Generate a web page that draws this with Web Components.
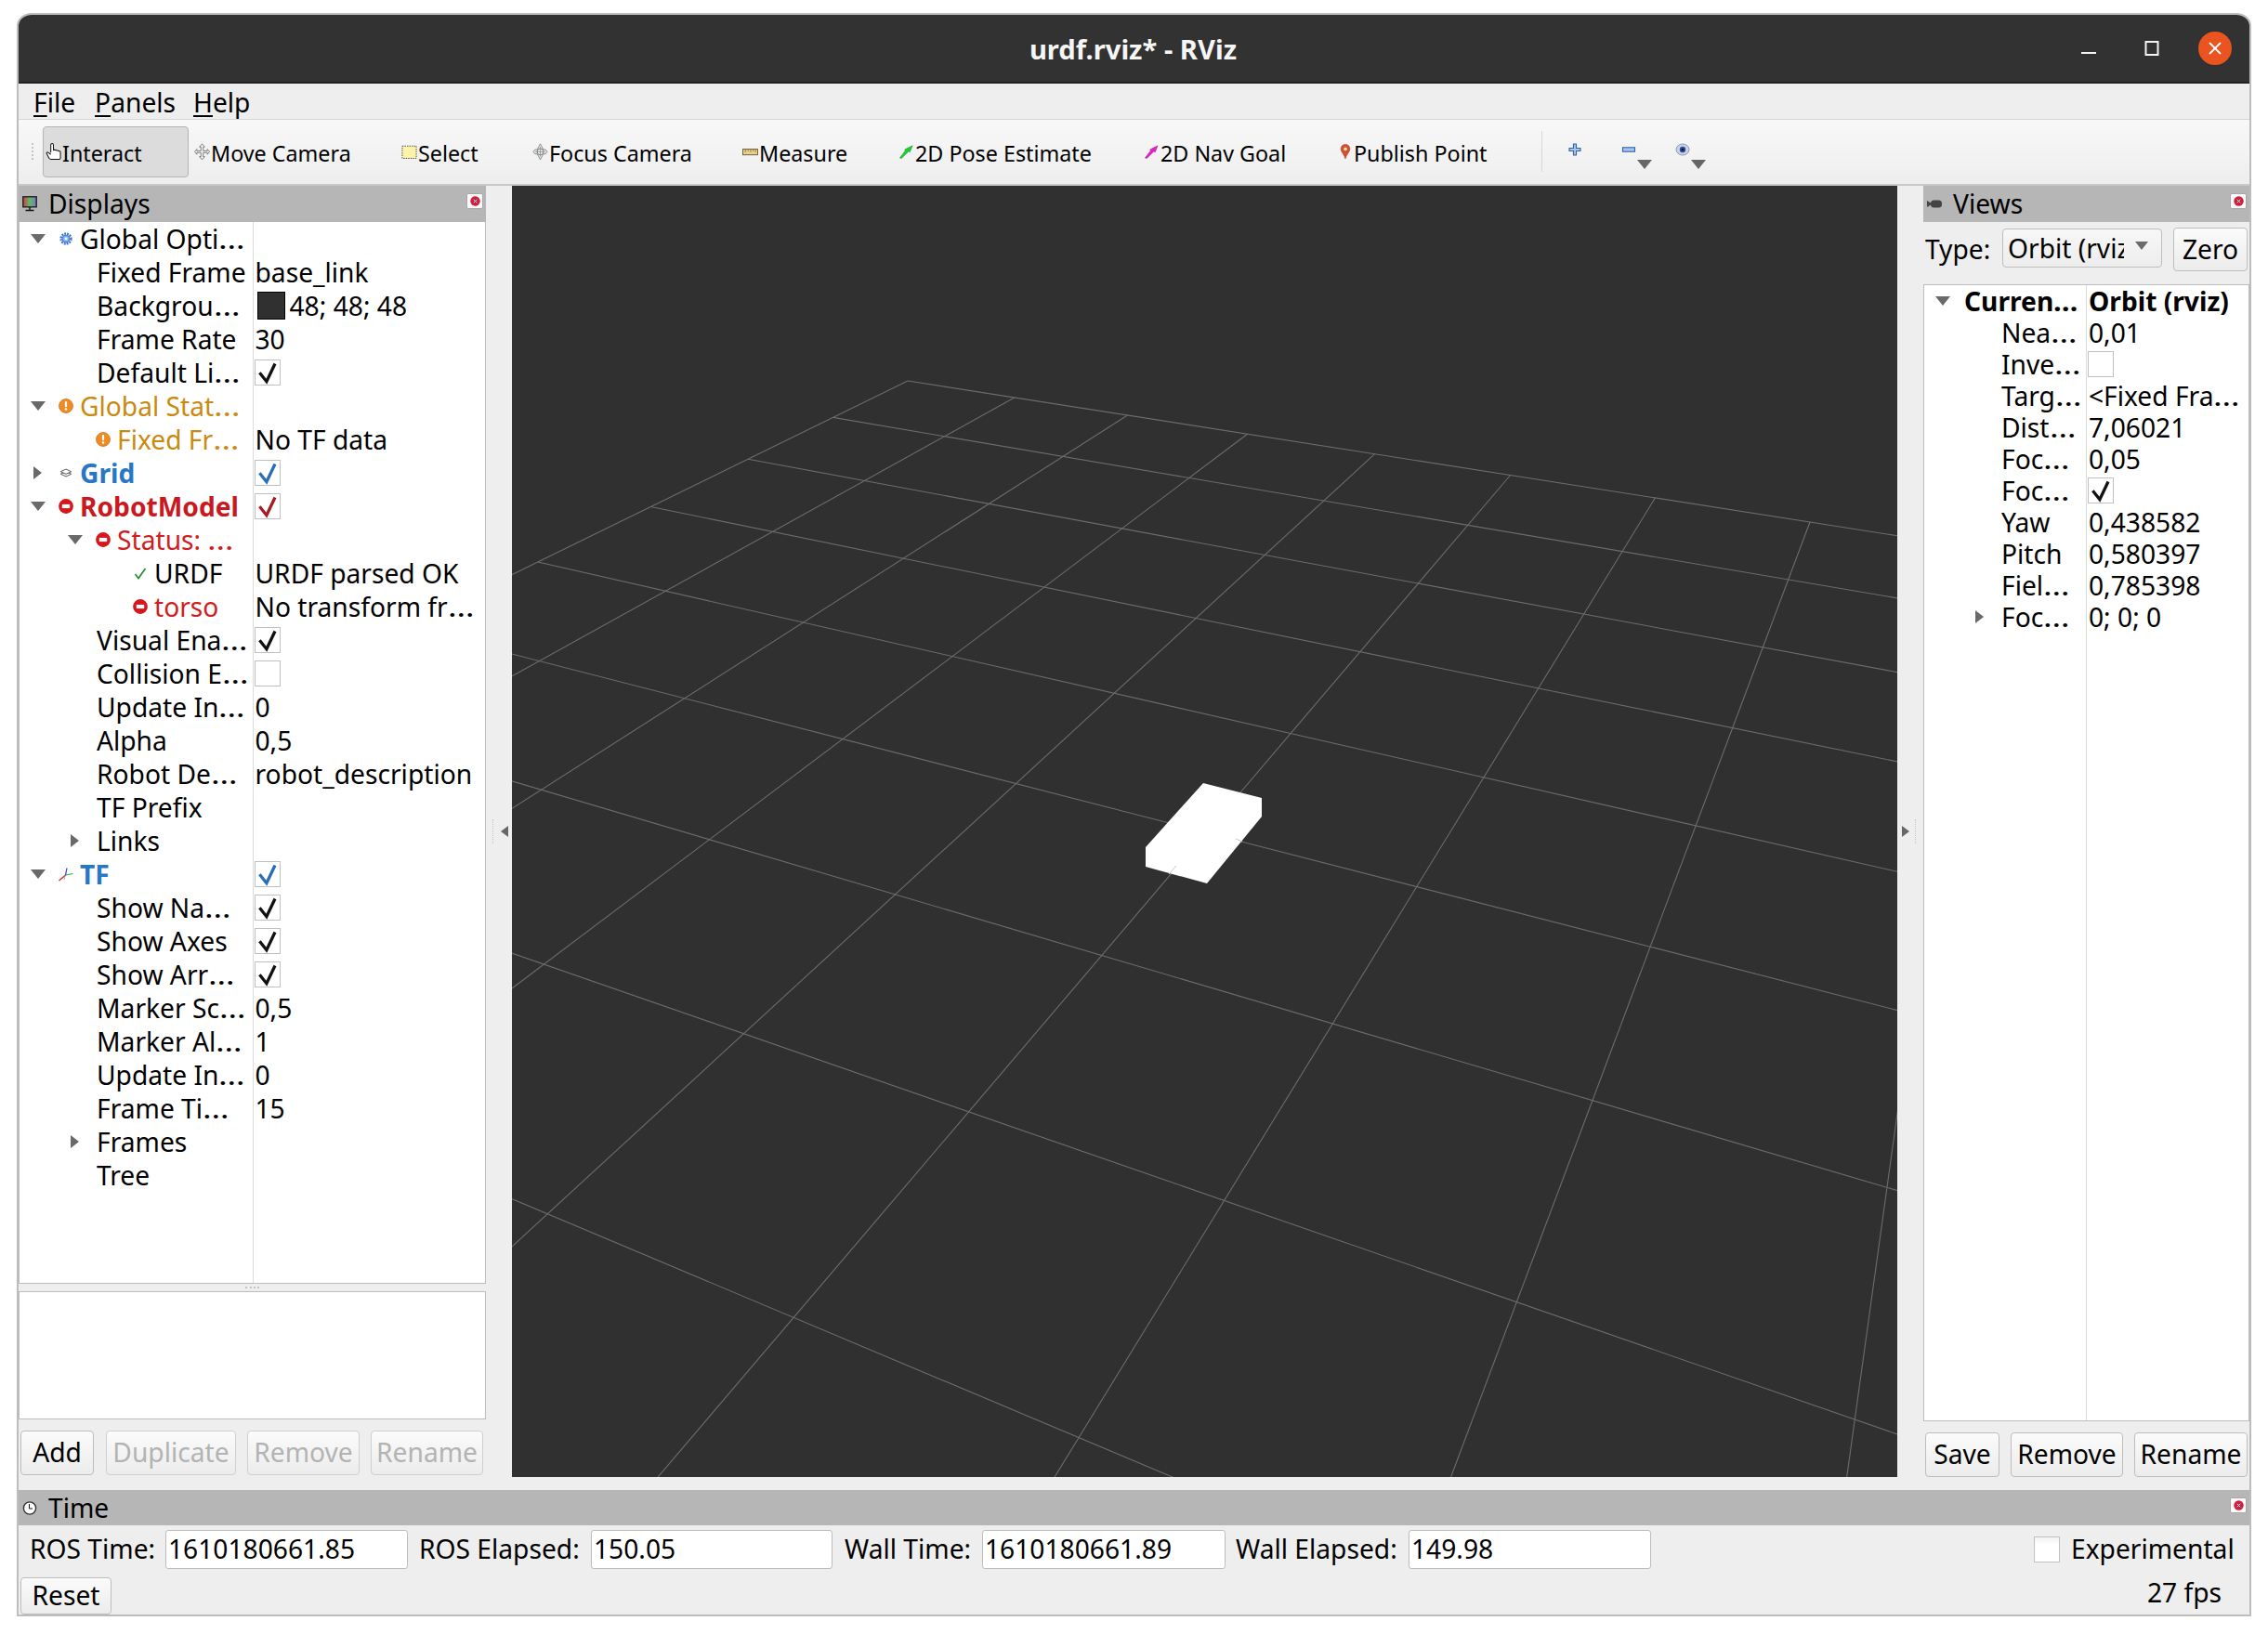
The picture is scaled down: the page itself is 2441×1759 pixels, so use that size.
<!DOCTYPE html>
<html lang="en"><head><meta charset="utf-8"><title>urdf.rviz* - RViz</title>
<style>
html,body{margin:0;background:#fff;overflow:hidden}
body{font-family:"Noto Sans","Open Sans",sans-serif;color:#000;font-size:28.2px}
</style></head><body>
<rviz-window>
  <title-bar slot="top">urdf.rviz* - RViz</title-bar>
  <menu-bar slot="top"><menu-item>File</menu-item><menu-item style="margin-left:21px">Panels</menu-item><menu-item style="margin-left:19px">Help</menu-item></menu-bar>
  <tool-bar slot="top">
    <tool-btn icon="hand" w="157" active>Interact</tool-btn>
    <tool-btn icon="move" w="223" style="margin-left:3px">Move Camera</tool-btn>
    <tool-btn icon="select" w="141">Select</tool-btn>
    <tool-btn icon="focus" w="226">Focus Camera</tool-btn>
    <tool-btn icon="measure" w="168">Measure</tool-btn>
    <tool-btn icon="pose" w="264">2D Pose Estimate</tool-btn>
    <tool-btn icon="nav" w="211">2D Nav Goal</tool-btn>
    <tool-btn icon="pin" w="220" narrow>Publish Point</tool-btn>
  </tool-bar>
  <main-area slot="main">
    <dock-panel icon="monitor" heading="Displays">
      <prop-tree notop style="--name-w:250.5px;--row-h:36px;flex:1">
        <prop-row arrow="down" icon="gear" name="Global Opti…"></prop-row>
        <prop-row level="1" name="Fixed Frame" value="base_link"></prop-row>
        <prop-row level="1" name="Backgrou…" value="48; 48; 48" swatch="#303030"></prop-row>
        <prop-row level="1" name="Frame Rate" value="30"></prop-row>
        <prop-row level="1" name="Default Li…" check="#111"></prop-row>
        <prop-row arrow="down" icon="warn" name="Global Stat…" color="#c88a10"></prop-row>
        <prop-row level="1" icon="warn" name="Fixed Fr…" color="#c88a10" value="No TF data"></prop-row>
        <prop-row arrow="right" icon="grid" name="Grid" color="#2a76c6" bold check="#2a6db5"></prop-row>
        <prop-row arrow="down" icon="err" name="RobotModel" color="#c8191f" bold check="#a81c24"></prop-row>
        <prop-row level="1" arrow="down" icon="err" name="Status: …" color="#cf1d22"></prop-row>
        <prop-row level="2" icon="ok" name="URDF" value="URDF parsed OK"></prop-row>
        <prop-row level="2" icon="err" name="torso" color="#cf1d22" value="No transform fr…"></prop-row>
        <prop-row level="1" name="Visual Ena…" check="#111"></prop-row>
        <prop-row level="1" name="Collision E…" check="off"></prop-row>
        <prop-row level="1" name="Update In…" value="0"></prop-row>
        <prop-row level="1" name="Alpha" value="0,5"></prop-row>
        <prop-row level="1" name="Robot De…" value="robot_description"></prop-row>
        <prop-row level="1" name="TF Prefix"></prop-row>
        <prop-row level="1" arrow="right" name="Links"></prop-row>
        <prop-row arrow="down" icon="tf" name="TF" color="#2a76c6" bold check="#2a6db5"></prop-row>
        <prop-row level="1" name="Show Na…" check="#111"></prop-row>
        <prop-row level="1" name="Show Axes" check="#111"></prop-row>
        <prop-row level="1" name="Show Arr…" check="#111"></prop-row>
        <prop-row level="1" name="Marker Sc…" value="0,5"></prop-row>
        <prop-row level="1" name="Marker Al…" value="1"></prop-row>
        <prop-row level="1" name="Update In…" value="0"></prop-row>
        <prop-row level="1" name="Frame Ti…" value="15"></prop-row>
        <prop-row level="1" arrow="right" name="Frames"></prop-row>
        <prop-row level="1" name="Tree"></prop-row>
      </prop-tree>
      <grip-h></grip-h>
      <help-box></help-box>
      <btn-row style="margin:12px 0 16px 2px">
        <q-button w="79">Add</q-button>
        <q-button w="140" disabled style="margin-left:13px">Duplicate</q-button>
        <q-button w="121" disabled style="margin-left:12px">Remove</q-button>
        <q-button w="121" disabled style="margin-left:12px">Rename</q-button>
      </btn-row>
    </dock-panel>
    <split-handle dir="left"></split-handle>
    <viewport-3d></viewport-3d>
    <split-handle dir="right"></split-handle>
    <dock-panel icon="camera" heading="Views">
      <type-row>
        <span>Type:</span>
        <q-combo>Orbit (rviz)</q-combo>
        <q-button w="80" h="47">Zero</q-button>
      </type-row>
      <prop-tree style="--name-w:174px;--row-h:34px;flex:1">
        <prop-row arrow="down" name="Curren…" value="Orbit (rviz)" bold vbold></prop-row>
        <prop-row level="1" name="Nea…" value="0,01"></prop-row>
        <prop-row level="1" name="Inve…" check="off"></prop-row>
        <prop-row level="1" name="Targ…" value="&lt;Fixed Fra…"></prop-row>
        <prop-row level="1" name="Dist…" value="7,06021"></prop-row>
        <prop-row level="1" name="Foc…" value="0,05"></prop-row>
        <prop-row level="1" name="Foc…" check="#111"></prop-row>
        <prop-row level="1" name="Yaw" value="0,438582"></prop-row>
        <prop-row level="1" name="Pitch" value="0,580397"></prop-row>
        <prop-row level="1" name="Fiel…" value="0,785398"></prop-row>
        <prop-row level="1" arrow="right" name="Foc…" value="0; 0; 0"></prop-row>
      </prop-tree>
      <btn-row style="margin:12px 0 14px 2px">
        <q-button w="80">Save</q-button>
        <q-button w="121" style="margin-left:12px">Remove</q-button>
        <q-button w="122" style="margin-left:12px">Rename</q-button>
      </btn-row>
    </dock-panel>
  </main-area>
  <dock-panel slot="bottom" icon="clock" heading="Time" style="--head-h:38px">
    <time-row>
      <time-label w="146" style="margin-left:12px">ROS Time:</time-label><q-input w="261">1610180661.85</q-input>
      <time-label w="185" style="margin-left:12px">ROS Elapsed:</time-label><q-input w="260">150.05</q-input>
      <time-label w="148" style="margin-left:13px">Wall Time:</time-label><q-input w="262">1610180661.89</q-input>
      <time-label w="186" style="margin-left:11px">Wall Elapsed:</time-label><q-input w="261">149.98</q-input>
      <span style="flex:1"></span>
      <check-box color="off" plain></check-box><time-label w="192" style="margin-left:12px">Experimental</time-label>
    </time-row>
    <reset-row><q-button w="98" h="40">Reset</q-button><time-label w="80" style="margin-bottom:7px">27 fps</time-label></reset-row>
  </dock-panel>
</rviz-window>
<script>
const ICONS={
 gear:'<svg viewBox="0 0 16 16"><circle cx="8" cy="8" r="6.200" fill="none" stroke="#3a78cc" stroke-width="2.800" stroke-dasharray="2.100 1.200"/><circle cx="8" cy="8" r="4.400" fill="#86b3ec" stroke="#3a78cc" stroke-width="1.200"/><circle cx="8" cy="8" r="1.700" fill="#f4f8fe"/></svg>',
 warn:'<svg viewBox="0 0 16 16"><circle cx="8" cy="8" r="7.500" fill="#ee8b25" stroke="#d0751b" stroke-width=".8"/><rect x="6.900" y="3" width="2.200" height="6.200" rx=".8" fill="#fff"/><circle cx="8" cy="11.500" r="1.300" fill="#fff"/></svg>',
 err:'<svg viewBox="0 0 16 16"><circle cx="8" cy="8" r="7.900" fill="#d9141a"/><rect x="3.800" y="5.900" width="8.400" height="4.200" fill="#fff"/></svg>',
 grid:'<svg viewBox="0 0 16 16"><path d="M8 6.500 14.500 9.500 8 12.500 1.500 9.500Z" fill="#fff" stroke="#444" stroke-width="1"/><path d="M8 3.500 14.500 6.500 8 9.500 1.500 6.500Z" fill="#fff" stroke="#444" stroke-width="1"/></svg>',
 ok:'<svg viewBox="0 0 16 16"><path d="M2.500 9 6 13.500 13.500 3" fill="none" stroke="#2d8a33" stroke-width="1.700"/></svg>',
 tf:'<svg viewBox="0 0 16 16"><path d="M7.500 9 .5 15" stroke="#d22" stroke-width="1.300"/><path d="M7.500 9 15.500 7.500" stroke="#2b3" stroke-width="1.200"/><path d="M7.500 9 9 1.500" stroke="#33c" stroke-width="1.200"/><path d="M7.500 9 4 13 M7.500 9 6 14" stroke="#888" stroke-width=".7"/></svg>',
 hand:'<svg viewBox="0 0 18 22"><path d="M6 12V3.200a1.500 1.500 0 0 1 3 0V9l1-.3V9l2 .1v.2l2 .3.2.3 2 .5c.6.2.8.6.8 1.300v6.200c0 1-.7 1.600-1.700 1.600H6.200c-1 0-1.600-.4-2.200-1.300L1.300 13c-.5-1 .7-2 1.700-1.200L6 14" fill="#fff" stroke="#111" stroke-width="1.100"/></svg>',
 move:'<svg viewBox="0 0 18 22"><path d="M9 2 12 5.500H10.300V10H15V8L17.500 11 15 14V12H10.300V16.500H12L9 20 6 16.500H7.700V12H3V14L.5 11 3 8V10H7.700V5.500H6Z" fill="#f2f2f2" stroke="#777" stroke-width="1"/></svg>',
 select:'<svg viewBox="0 0 18 22"><rect x="1" y="4.500" width="16" height="14" fill="#fbf3a8" stroke="#444" stroke-width="1" stroke-dasharray="1.500 1.200"/></svg>',
 focus:'<svg viewBox="0 0 18 22"><path d="M9 2 12.500 8.500H15L17 11 15 13.500H12.500L9 20 5.500 13.500H3L1 11 3 8.500H5.500Z" fill="#e6e6e6" stroke="#8a8a8a" stroke-width="1"/><circle cx="9" cy="11" r="3.600" fill="#efefef" stroke="#777" stroke-width="1"/><path d="M9 5.500V16.500M3.500 11H14.500" stroke="#888" stroke-width=".8"/></svg>',
 measure:'<svg viewBox="0 0 18 22"><rect x=".5" y="8" width="17" height="6.500" fill="#e8cf8c" stroke="#6b5d3a" stroke-width="1"/><path d="M3.500 8.500v3M6.500 8.500v2M9.500 8.500v3M12.500 8.500v2M15 8.500v3" stroke="#6b5d3a" stroke-width=".7"/></svg>',
 pose:'<svg viewBox="0 0 18 22"><path d="M1.500 18 8 9.500 7 8.500 16 4 13 11.500 11.500 10.500 3.500 18.500Z" fill="#19d130" stroke="#108020" stroke-width=".5"/></svg>',
 nav:'<svg viewBox="0 0 18 22"><path d="M1.500 18 8 9.500 7 8.500 16 4 13 11.500 11.500 10.500 3.500 18.500Z" fill="#e81fc3" stroke="#a01488" stroke-width=".5"/></svg>',
 pin:'<svg viewBox="0 0 16 22"><path d="M8 21.500C6.500 15 1.500 11.500 1.500 7a6.500 6.500 0 0 1 13 0c0 4.500-5 8-6.500 14.500Z" fill="#d3512f" stroke="#933" stroke-width=".7"/><circle cx="8" cy="7" r="2.500" fill="#f7d9b0"/></svg>',
 plus:'<svg viewBox="0 0 16 22"><path d="M6.500 5H9.500V9.500H14V12.500H9.500V17H6.500V12.500H2V9.500H6.500Z" fill="#a8c6ec" stroke="#2f62ad" stroke-width="1.100"/></svg>',
 minus:'<svg viewBox="0 0 16 22"><rect x="1.500" y="8.800" width="13" height="4.400" fill="#a8c6ec" stroke="#2f62ad" stroke-width="1.100"/></svg>',
 eye:'<svg viewBox="0 0 16 22"><ellipse cx="8" cy="11" rx="7" ry="6" fill="#c8d4e6" stroke="#8f9bb0" stroke-width="1"/><circle cx="8" cy="11" r="3.200" fill="#2a4f96"/><circle cx="8" cy="11" r="1.300" fill="#0c1630"/></svg>',
 monitor:'<svg viewBox="0 0 16 17"><defs><linearGradient id="m"><stop offset="0" stop-color="#c94040"/><stop offset=".5" stop-color="#66b868"/><stop offset="1" stop-color="#7a78c8"/></linearGradient></defs><rect x=".8" y=".8" width="14.400" height="11" fill="url(#m)" stroke="#222" stroke-width="1.400"/><path d="M8 12V15M3.500 15.500H12.500" stroke="#111" stroke-width="1.400"/></svg>',
 camera:'<svg viewBox="0 0 16 17"><path d="M0 5V12L4 9.500V7.500Z" fill="#444"/><rect x="4" y="4.500" width="12" height="8" rx="3.500" fill="#444"/></svg>',
 clock:'<svg viewBox="0 0 16 17"><circle cx="8" cy="8.500" r="6.600" fill="#fff" stroke="#333" stroke-width="1.400"/><path d="M7.500 4V9H11" fill="none" stroke="#111" stroke-width="1"/></svg>'
};
function def(tag,html,init){
  customElements.define(tag,class extends HTMLElement{
    connectedCallback(){
      if(this.shadowRoot)return;
      const r=this.attachShadow({mode:'open'});
      r.innerHTML=typeof html==='function'?html(this):html;
      if(init)init(this,r);
    }
  });
}
const attr=(e,n,d='')=>e.hasAttribute(n)?e.getAttribute(n):d;
const txt=s=>s.replace(/&/g,'&amp;').replace(/</g,'&lt;').replace('…','<span class="e">…</span>');
def('r-icon',e=>`<style>:host{display:inline-flex;align-items:center;justify-content:center;flex:none;width:var(--s,16px)}svg{display:block;width:100%;height:auto}</style>${ICONS[attr(e,'name')]||''}`);
def('rviz-window',`<style>
:host{display:flex;flex-direction:column;box-sizing:border-box;width:2405px;height:1726px;margin:14px 0 0 18px;background:#eee;border:2px solid #bdbdbd;border-top-left-radius:16px 14px;border-top-right-radius:16px 14px;overflow:hidden}
</style><slot name="top"></slot><slot name="main"></slot><slot name="bottom"></slot>`);
def('title-bar',`<style>
:host{display:grid;grid-template-columns:1fr auto 1fr;align-items:center;flex:none;box-sizing:border-box;height:74px;background:#333232;border-bottom:2px solid #222;color:#f6f6f6;font:700 29.2px "Noto Sans",sans-serif}
.c{grid-column:2;padding-top:2px;margin-left:-2px}
.w{grid-column:3;justify-self:end;display:flex;margin-right:3px}
.b{width:68px;height:36px;display:flex;align-items:center;justify-content:center}
.x{width:36px;height:36px;border-radius:50%;background:#e95420;display:flex;align-items:center;justify-content:center}
svg{display:block}
</style><div class="c"><slot></slot></div><div class="w">
<div class="b"><svg width="16" height="16" viewBox="0 0 16 16"><path d="M0 13H16" stroke="#f4f4f4" stroke-width="2"/></svg></div>
<div class="b"><svg width="16" height="16" viewBox="0 0 16 16"><rect x="1.500" y="1" width="13" height="14" fill="none" stroke="#f4f4f4" stroke-width="2"/></svg></div>
<div class="b"><div class="x"><svg width="16" height="16" viewBox="0 0 16 16"><path d="M2 2 14 14M14 2 2 14" stroke="#fff" stroke-width="1.800"/></svg></div></div>
</div>`);
def('menu-bar',`<style>:host{display:flex;align-items:center;flex:none;box-sizing:border-box;height:39px;padding:1px 0 0 16px;border-bottom:1px solid #d6d6d6;background:#eee}</style><slot></slot>`);
def('menu-item',e=>{const t=e.textContent;return `<style>:host{display:block;line-height:36px}u{text-decoration:underline;text-decoration-thickness:2px;text-underline-offset:3px}</style><span><u>${t[0]}</u>${t.slice(1)}</span>`});
def('tool-bar',`<style>:host{display:flex;align-items:center;flex:none;box-sizing:border-box;height:71px;padding:0 0 1px 26px;background:linear-gradient(#f8f8f8,#eee);border-bottom:2px solid #c8c8c8}
.grip{box-sizing:border-box;width:2px;height:18px;margin:0 10px 0 -12px;border-left:2px dotted #c4c4c4}
.sep{width:1px;height:44px;background:#d8d8d8;margin-right:27px;flex:none}
.i{display:flex;flex-direction:column;width:58px;height:50px;align-items:flex-start;flex:none}
.i r-icon{margin-top:12px}
.a{width:0;height:0;border-left:8px solid transparent;border-right:8px solid transparent;border-top:10px solid #666;margin:0 0 0 17px}
</style><div class="grip"></div><slot></slot><div class="sep"></div>
<div class="i"><r-icon name="plus"></r-icon></div>
<div class="i"><r-icon name="minus"></r-icon><div class="a"></div></div>
<div class="i"><r-icon name="eye"></r-icon><div class="a"></div></div>`);
def('tool-btn',e=>`<style>:host{display:flex;align-items:center;flex:none;box-sizing:border-box;width:${attr(e,'w')}px;height:55px;font-size:23.300px;padding-left:3px;white-space:nowrap;${e.hasAttribute('active')?'background:#dcdcdc;border:1px solid #b4b4b4;border-radius:4px;padding-left:2px;':''}}
r-icon{--s:${e.hasAttribute('narrow')?'12px':'17px'};margin-right:${e.hasAttribute('narrow')?'3px':'1px'}}
span{padding-top:3px}</style><r-icon name="${attr(e,'icon')}"></r-icon><span><slot></slot></span>`);
def('main-area',`<style>:host{display:grid;grid-template-columns:503px 28px 1491px 28px 351px;flex:1;min-height:0}</style><slot></slot>`);
def('dock-panel',e=>`<style>:host{display:flex;flex-direction:column;min-height:0;min-width:0}
.h{display:flex;align-items:center;flex:none;height:var(--head-h,39px);background:#b6b6b6;padding:0 3px 0 4px;box-sizing:border-box}
.t{margin-left:12px;flex:1;line-height:1}
.x{width:16px;height:15px;background:#fafafa;border:1px solid #a8a8a8;border-radius:2px;display:flex;align-items:center;justify-content:center;margin-top:-6px}
.x svg{display:block}
</style><div class="h"><r-icon name="${attr(e,'icon')}"></r-icon><span class="t">${attr(e,'heading')}</span>
<div class="x"><svg width="11" height="11" viewBox="0 0 11 11"><circle cx="5.500" cy="5.500" r="5.200" fill="#d01f3c"/><path d="M3.800 3.800 7.200 7.200M7.200 3.800 3.800 7.200" stroke="#fff" stroke-width="1"/></svg></div></div><slot></slot>`);
def('prop-tree',e=>`<style>:host{display:block;min-height:0;box-sizing:border-box;border:1px solid #bdbdbd;${e.hasAttribute('notop')?'border-top:0;':''}overflow:hidden;background:linear-gradient(#dcdcdc,#dcdcdc) no-repeat var(--name-w) 0/1px 100%,#fff}</style><slot></slot>`);
def('prop-row',e=>{
  const lvl=+attr(e,'level','0'),arrow=attr(e,'arrow'),icon=attr(e,'icon'),ck=attr(e,'check'),sw=attr(e,'swatch'),bold=e.hasAttribute('bold');
  const s=(icon==='grid'||icon==='gear')?14:16;
  const a=arrow==='down'?'<svg width="16" height="10" viewBox="0 0 16 10"><path d="M0 0H16L8 10Z" fill="#696969"/></svg>':arrow==='right'?'<svg width="10" height="14" viewBox="0 0 10 14"><path d="M0 0V14L9 7Z" fill="#696969"/></svg>':'';
  return `<style>:host{display:grid;grid-template-columns:var(--name-w) 1fr;height:var(--row-h);align-items:center;white-space:nowrap;line-height:1.2}
.n{display:flex;align-items:center;padding-left:${lvl*40+8}px;height:100%;box-sizing:border-box;color:${attr(e,'color','#000')};${bold?'font-weight:700;':''}}
.a{width:24px;flex:none;display:flex;align-items:center;justify-content:center}
r-icon{margin:0 ${16-s/2-1}px 0 ${18-s/2}px;--s:${s}px}
.nt{${icon?'':'margin-left:11px;'}padding-top:1px}
.v{padding-left:${sw||ck?2:3}px;display:flex;align-items:center;${e.hasAttribute('vbold')?'font-weight:700;':''}}
.v span.t{padding-top:1px}
.s{width:30px;height:30px;box-sizing:border-box;background:${sw};border:1px solid #000;margin:0 5px 0 3px;flex:none}
.e{display:inline-block;transform:scaleX(${bold?1.1:1.28});transform-origin:0 50%;margin-right:${bold?1:4}px}
</style><div class="n"><div class="a">${a}</div>${icon?`<r-icon name="${icon}"></r-icon>`:''}<span class="nt">${txt(attr(e,'name'))}</span></div><div class="v">${sw?'<span class="s"></span>':''}${ck?`<check-box color="${ck}"></check-box>`:''}<span class="t">${txt(attr(e,'value'))}</span></div>`});
def('check-box',e=>{const c=attr(e,'color','off');return `<style>:host{display:block;flex:none;width:28px;height:28px;box-sizing:border-box;border:1px solid #c0c0c0;background:${e.hasAttribute('plain')?'linear-gradient(#f2f2f2,#fff 30%)':'#fff'}}svg{display:block}</style>${c==='off'?'':`<svg width="26" height="26" viewBox="0 0 26 26"><path d="M4.400 13.300 11.900 22.700 21 3.500" fill="none" stroke="${c}" stroke-width="3.300"/></svg>`}`});
def('q-button',e=>`<style>:host{display:flex;align-items:center;justify-content:center;flex:none;box-sizing:border-box;width:${attr(e,'w')}px;height:${attr(e,'h','48')}px;padding-bottom:2px;border:1px solid ${e.hasAttribute('disabled')?'#cfcfcf':'#bdbdbd'};border-radius:4px;background:linear-gradient(#fbfbfb,#ececec);color:${e.hasAttribute('disabled')?'#b3b3b3':'#000'};white-space:nowrap}</style><slot></slot>`);
def('q-input',e=>`<style>:host{display:flex;align-items:center;flex:none;box-sizing:border-box;width:${attr(e,'w')}px;height:42px;padding:0 0 2px 2px;background:#fff;border:1px solid #bdbdbd;border-radius:3px;white-space:nowrap}</style><slot></slot>`);
def('q-combo',`<style>:host{display:flex;align-items:center;flex:none;box-sizing:border-box;width:172px;height:42px;margin-top:-3px;padding:0 0 0 5px;background:linear-gradient(#f7f7f7,#ededed);border:1px solid #bdbdbd;border-radius:4px}
.t{display:block;width:125px;overflow:hidden;white-space:nowrap;line-height:1.3}
i{width:0;height:0;border-left:7px solid transparent;border-right:7px solid transparent;border-top:9px solid #6a6a6a;margin:-5px 0 0 12px}</style><span class="t"><slot></slot></span><i></i>`);
def('btn-row',`<style>:host{display:flex;flex:none}</style><slot></slot>`);
def('type-row',`<style>:host{display:flex;align-items:center;flex:none;height:47px;margin:6px 2px 14px 2px}::slotted(q-combo){margin-left:12px}::slotted(q-button){margin-left:12px}::slotted(span){width:71px;flex:none;padding-bottom:2px}</style><slot></slot>`);
def('time-row',`<style>:host{display:flex;align-items:center;flex:none;height:42px;margin-top:5px;white-space:nowrap}</style><slot></slot>`);
def('time-label',e=>`<style>:host{display:block;flex:none;width:${attr(e,'w')}px;padding-bottom:2px}</style><slot></slot>`);
def('reset-row',`<style>:host{display:flex;align-items:center;justify-content:space-between;flex:none;height:40px;margin-top:9px;padding:0 30px 0 2px;white-space:nowrap}</style><slot></slot>`);
def('help-box',`<style>:host{display:block;flex:none;box-sizing:border-box;height:138px;background:#fff;border:1px solid #bdbdbd}</style>`);
def('grip-h',`<style>:host{display:flex;justify-content:center;align-items:center;flex:none;height:8px}i{width:15px;border-top:2px dotted #c4c4c4}</style><i></i>`);
def('split-handle',e=>{const l=attr(e,'dir')==='left';return `<style>:host{display:flex;align-items:center;height:1390px;padding:0 ${l?'4px 0 7px':'8px 0 5px'};box-sizing:border-box;justify-content:space-between;flex-direction:${l?'row':'row-reverse'}}
i{display:block;height:26px;border-left:1px dotted #c4c4c4}b{display:block;width:0;height:0;border-top:6px solid transparent;border-bottom:6px solid transparent;${l?'border-right:8px solid #666':'border-left:8px solid #666'}}</style><i></i><b></b>`});
def('viewport-3d',`<style>:host{display:block;width:1491px;height:1390px;background:#303030}svg{display:block}</style><svg width="1491" height="1390" viewBox="551 200 1491 1390"></svg>`,(e,r)=>{
  const P=(i,j)=>{const w=1-.02787*i-.06001*j;return [(84.42*i-134.25*j+977)/w,(6.05*i+12.44*j+410)/w]};
  let s='';
  const L=(a,b)=>`<line x1="${a[0].toFixed(1)}" y1="${a[1].toFixed(1)}" x2="${b[0].toFixed(1)}" y2="${b[1].toFixed(1)}"/>`;
  for(let k=0;k<=10;k++){s+=L(P(k,0),P(k,10))+L(P(0,k),P(10,k))}
  r.querySelector('svg').innerHTML=`<g stroke="#6c6c6c" stroke-width="1.100" fill="none">${s}</g>
  <polygon points="1295,843 1358,859 1358,879 1299,951 1233,933 1233,912" fill="#fff"/>
  <g stroke="#c8c8c8" stroke-width="1"><line x1="1330" y1="903" x2="1337" y2="906"/><line x1="1258" y1="941" x2="1266" y2="932"/></g>`;
});
</script>
</body></html>
